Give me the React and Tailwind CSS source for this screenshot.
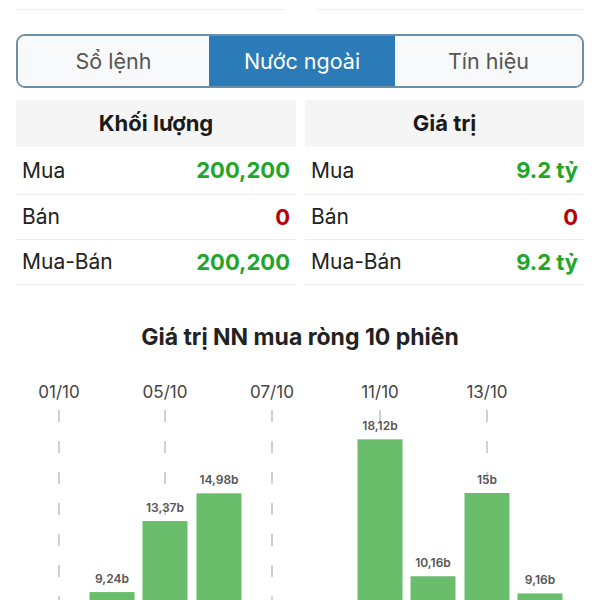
import React from 'react';

const font = { fontFamily: 'Inter, "Noto Sans", sans-serif' };

const rows = [
  { label: 'Mua', vol: '200,200', val: '9.2 tỷ', up: true, h: 'h-[48px]' },
  { label: 'Bán', vol: '0', val: '0', up: false, h: 'h-[45px]' },
  { label: 'Mua-Bán', vol: '200,200', val: '9.2 tỷ', up: true, h: 'h-[45px]' },
];

// bars at 01/10, 07/10 and 08/10 sit below the fold, no label shown
const bars = [
  { x: 59, v: 2.12, date: '01/10' },
  { x: 112, v: 9.24, label: '9,24b' },
  { x: 165, v: 13.37, label: '13,37b', date: '05/10' },
  { x: 219, v: 14.98, label: '14,98b' },
  { x: 272, v: 3.45, date: '07/10' },
  { x: 326, v: 2.08 },
  { x: 380, v: 18.12, label: '18,12b', date: '11/10' },
  { x: 433, v: 10.16, label: '10,16b' },
  { x: 487, v: 15, label: '15b', date: '13/10' },
  { x: 540, v: 9.16, label: '9,16b' },
];

const Segmented = () => {
  const tabs = ['Sổ lệnh', 'Nước ngoài', 'Tín hiệu'];
  return (
    <div className="mx-4 mt-[24px] h-[54px] grid grid-cols-[191px_186px_1fr] border-2 border-[#6b8eab] rounded-[9px] overflow-hidden">
      {tabs.map((t, i) => (
        <div
          key={t}
          className={
            i === 1
              ? 'flex items-center justify-center bg-[#2a7bb8] text-white text-[21.5px]'
              : 'flex items-center justify-center bg-[#f8f9fa] text-[#555] text-[21.5px]'
          }
        >
          {t}
        </div>
      ))}
    </div>
  );
};

const Column = ({ title, field }) => (
  <div>
    <div className="h-[47px] bg-[#f5f5f5] flex items-center justify-center text-[22px] font-bold text-[#1a1a1a]">
      {title}
    </div>
    {rows.map((r) => (
      <div key={r.label} className={`${r.h} border-b border-[#ededed] flex items-center justify-between pl-[6px] pr-[6px]`}>
        <span className="text-[21px] text-[#222]">{r.label}</span>
        <span className={r.up ? 'text-[22px] font-bold text-[#22a628]' : 'text-[22px] font-bold text-[#b40000]'}>
          {r[field]}
        </span>
      </div>
    ))}
  </div>
);

const Chart = () => {
  const base = 381;
  const k = 17.2;
  return (
    <svg width="600" height="232" className="block mt-[15px]">
      {bars.filter((b) => b.date).map((b) => (
        <g key={b.date}>
          <text x={b.x} y="28" textAnchor="middle" fontSize="17" fill="#444" style={font}>
            {b.date}
          </text>
          <line x1={b.x} y1="40" x2={b.x} y2="400" stroke="#c2c2c2" strokeWidth="1.5" strokeDasharray="12 19" />
        </g>
      ))}
      {bars.map((b) => {
        const top = base - b.v * k;
        return (
          <g key={b.x}>
            {b.label && (
              <text x={b.x} y={top - 9} textAnchor="middle" fontSize="12" fontWeight="600" fill="#555" style={font}>
                {b.label}
              </text>
            )}
            <rect x={b.x - 22.5} y={top} width="45" height={base - top} fill="#6abd6b" />
          </g>
        );
      })}
    </svg>
  );
};

export default function App() {
  return (
    <div className="w-[600px] bg-white" style={font}>
      <div className="h-[10px] flex justify-between px-4">
        <div className="w-[269px] border-b border-[#efefef]" />
        <div className="w-[268px] border-b border-[#efefef]" />
      </div>
      <Segmented />
      <div className="mx-4 mt-[12px] grid grid-cols-[280px_1fr] gap-[9px]">
        <Column title="Khối lượng" field="vol" />
        <Column title="Giá trị" field="val" />
      </div>
      <div className="mt-[35px] text-center text-[23px] font-bold text-[#222]">
        Giá trị NN mua ròng 10 phiên
      </div>
      <Chart />
    </div>
  );
}
